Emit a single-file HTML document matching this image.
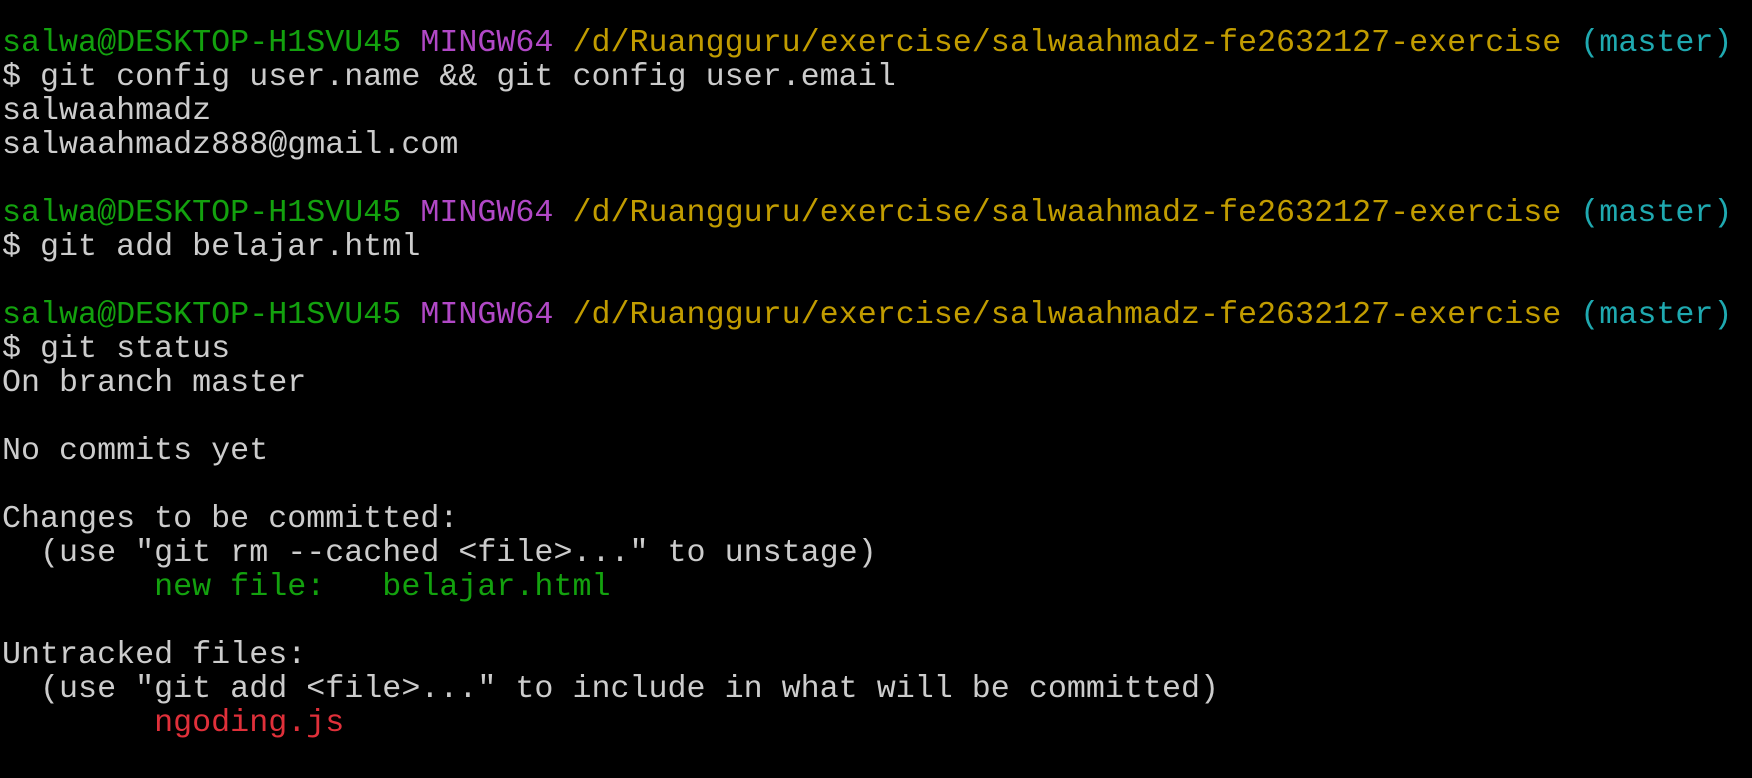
<!DOCTYPE html>
<html><head><meta charset="utf-8"><style>
html,body{margin:0;padding:0;background:#000;width:1752px;height:778px;overflow:hidden}
pre{margin:0;position:absolute;left:2px;top:26px;font-family:"Liberation Mono",monospace;font-size:31.7px;line-height:34px;color:#cccccc;white-space:pre}
.g{color:#13a10e}.m{color:#b148c6}.y{color:#c19c00}.c{color:#1fa9b0}.r{color:#e0303a}
</style></head><body><pre><span class="g">salwa@DESKTOP-H1SVU45</span> <span class="m">MINGW64</span> <span class="y">/d/Ruangguru/exercise/salwaahmadz-fe2632127-exercise</span> <span class="c">(master)</span>
$ git config user.name &amp;&amp; git config user.email
salwaahmadz
salwaahmadz888@gmail.com

<span class="g">salwa@DESKTOP-H1SVU45</span> <span class="m">MINGW64</span> <span class="y">/d/Ruangguru/exercise/salwaahmadz-fe2632127-exercise</span> <span class="c">(master)</span>
$ git add belajar.html

<span class="g">salwa@DESKTOP-H1SVU45</span> <span class="m">MINGW64</span> <span class="y">/d/Ruangguru/exercise/salwaahmadz-fe2632127-exercise</span> <span class="c">(master)</span>
$ git status
On branch master

No commits yet

Changes to be committed:
  (use "git rm --cached &lt;file&gt;..." to unstage)
        <span class="g">new file:   belajar.html</span>

Untracked files:
  (use "git add &lt;file&gt;..." to include in what will be committed)
        <span class="r">ngoding.js</span>
</pre></body></html>
